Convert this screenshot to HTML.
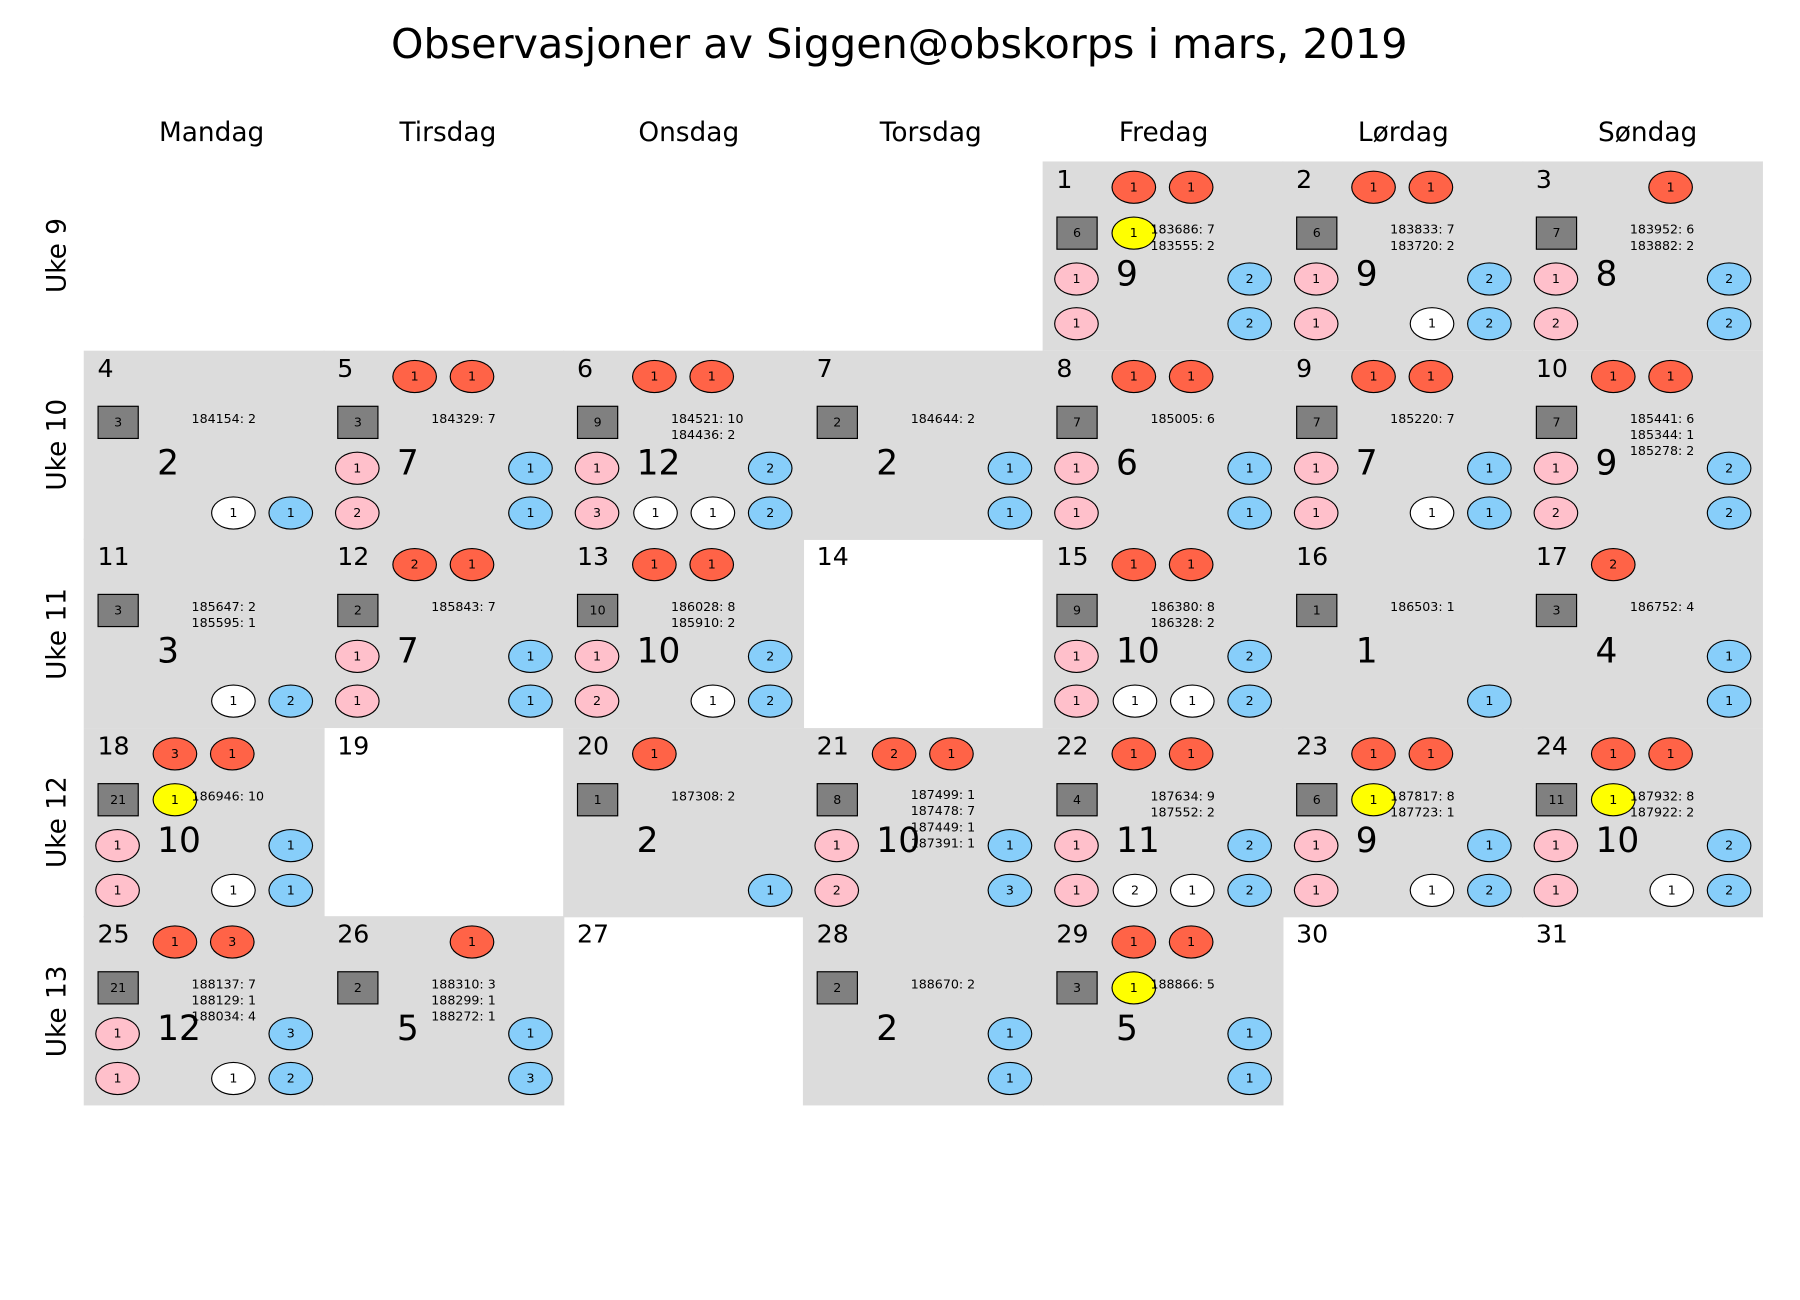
<!DOCTYPE html>
<html><head><meta charset="utf-8"><style>
html,body{margin:0;padding:0;background:#fff;width:1800px;height:1300px;overflow:hidden}
#w{position:absolute;left:0;top:2px;width:1560px;height:1127px;transform:scale(1.147);transform-origin:0 0;font-family:"DejaVu Sans","Liberation Sans",sans-serif;color:#000}
.title{position:absolute;left:0;width:1568px;top:17px;text-align:center;font-size:36px}
.h{position:absolute;top:101px;width:209px;text-align:center;font-size:23px}
.wk{position:absolute;left:50px;font-size:23px;transform:translate(-50%,-50%) rotate(-90deg);white-space:nowrap}
.cell{position:absolute;width:210px;height:165px;background:#dcdcdc}
.cell.e{background:transparent}
.d{position:absolute;left:12px;top:4px;font-size:22px}
.c{position:absolute;width:37px;height:27px;border:1px solid #000;border-radius:50%;font-size:11px;line-height:27px;text-align:center}
.R{background:#ff6347}.P{background:#ffc0cb}.B{background:#87cefa}.W{background:#fff}.Y{background:#ff0}
.r1{left:60px;top:8px}.r2{left:110px;top:8px}.y{left:60px;top:48px}
.p3{left:10px;top:88px}.p4{left:10px;top:127px}
.w1{left:61px;top:127px}.w2{left:111px;top:127px}
.b3{left:161px;top:88px}.b4{left:161px;top:127px}
.g{position:absolute;left:12px;top:48px;width:34px;height:27px;border:1px solid #000;background:#808080;font-size:11px;line-height:27px;text-align:center}
.t{position:absolute;left:94px;top:53px;font-size:11px;line-height:14px;white-space:nowrap}
.n{position:absolute;left:64px;top:79px;font-size:30px;line-height:40px}
</style></head><body><div id="w">
<div class="title">Observasjoner av Siggen@obskorps i mars, 2019</div>
<div class="h" style="left:80px">Mandag</div>
<div class="h" style="left:286px">Tirsdag</div>
<div class="h" style="left:496px">Onsdag</div>
<div class="h" style="left:707px">Torsdag</div>
<div class="h" style="left:910px">Fredag</div>
<div class="h" style="left:1119px">Lørdag</div>
<div class="h" style="left:1332px">Søndag</div>
<div class="wk" style="top:221px">Uke 9</div>
<div class="wk" style="top:386px">Uke 10</div>
<div class="wk" style="top:551px">Uke 11</div>
<div class="wk" style="top:715px">Uke 12</div>
<div class="wk" style="top:880px">Uke 13</div>

<!-- Row 0 -->
<div class="cell" style="left:909px;top:139px"><div class="d">1</div><div class="c R r1">1</div><div class="c R r2">1</div><div class="g">6</div><div class="c Y y">1</div><div class="t">183686: 7<br>183555: 2</div><div class="n">9</div><div class="c P p3">1</div><div class="c P p4">1</div><div class="c B b3">2</div><div class="c B b4">2</div></div>
<div class="cell" style="left:1118px;top:139px"><div class="d">2</div><div class="c R r1">1</div><div class="c R r2">1</div><div class="g">6</div><div class="t">183833: 7<br>183720: 2</div><div class="n">9</div><div class="c P p3">1</div><div class="c P p4">1</div><div class="c W w2">1</div><div class="c B b3">2</div><div class="c B b4">2</div></div>
<div class="cell" style="left:1327px;top:139px"><div class="d">3</div><div class="c R r2">1</div><div class="g">7</div><div class="t">183952: 6<br>183882: 2</div><div class="n">8</div><div class="c P p3">1</div><div class="c P p4">2</div><div class="c B b3">2</div><div class="c B b4">2</div></div>

<!-- Row 1 -->
<div class="cell" style="left:73px;top:304px"><div class="d">4</div><div class="g">3</div><div class="t">184154: 2</div><div class="n">2</div><div class="c W w2">1</div><div class="c B b4">1</div></div>
<div class="cell" style="left:282px;top:304px"><div class="d">5</div><div class="c R r1">1</div><div class="c R r2">1</div><div class="g">3</div><div class="t">184329: 7</div><div class="n">7</div><div class="c P p3">1</div><div class="c P p4">2</div><div class="c B b3">1</div><div class="c B b4">1</div></div>
<div class="cell" style="left:491px;top:304px"><div class="d">6</div><div class="c R r1">1</div><div class="c R r2">1</div><div class="g">9</div><div class="t">184521: 10<br>184436: 2</div><div class="n">12</div><div class="c P p3">1</div><div class="c P p4">3</div><div class="c W w1">1</div><div class="c W w2">1</div><div class="c B b3">2</div><div class="c B b4">2</div></div>
<div class="cell" style="left:700px;top:304px"><div class="d">7</div><div class="g">2</div><div class="t">184644: 2</div><div class="n">2</div><div class="c B b3">1</div><div class="c B b4">1</div></div>
<div class="cell" style="left:909px;top:304px"><div class="d">8</div><div class="c R r1">1</div><div class="c R r2">1</div><div class="g">7</div><div class="t">185005: 6</div><div class="n">6</div><div class="c P p3">1</div><div class="c P p4">1</div><div class="c B b3">1</div><div class="c B b4">1</div></div>
<div class="cell" style="left:1118px;top:304px"><div class="d">9</div><div class="c R r1">1</div><div class="c R r2">1</div><div class="g">7</div><div class="t">185220: 7</div><div class="n">7</div><div class="c P p3">1</div><div class="c P p4">1</div><div class="c W w2">1</div><div class="c B b3">1</div><div class="c B b4">1</div></div>
<div class="cell" style="left:1327px;top:304px"><div class="d">10</div><div class="c R r1">1</div><div class="c R r2">1</div><div class="g">7</div><div class="t">185441: 6<br>185344: 1<br>185278: 2</div><div class="n">9</div><div class="c P p3">1</div><div class="c P p4">2</div><div class="c B b3">2</div><div class="c B b4">2</div></div>

<!-- Row 2 -->
<div class="cell" style="left:73px;top:468px"><div class="d">11</div><div class="g">3</div><div class="t">185647: 2<br>185595: 1</div><div class="n">3</div><div class="c W w2">1</div><div class="c B b4">2</div></div>
<div class="cell" style="left:282px;top:468px"><div class="d">12</div><div class="c R r1">2</div><div class="c R r2">1</div><div class="g">2</div><div class="t">185843: 7</div><div class="n">7</div><div class="c P p3">1</div><div class="c P p4">1</div><div class="c B b3">1</div><div class="c B b4">1</div></div>
<div class="cell" style="left:491px;top:468px"><div class="d">13</div><div class="c R r1">1</div><div class="c R r2">1</div><div class="g">10</div><div class="t">186028: 8<br>185910: 2</div><div class="n">10</div><div class="c P p3">1</div><div class="c P p4">2</div><div class="c W w2">1</div><div class="c B b3">2</div><div class="c B b4">2</div></div>
<div class="cell e" style="left:700px;top:468px"><div class="d">14</div></div>
<div class="cell" style="left:909px;top:468px"><div class="d">15</div><div class="c R r1">1</div><div class="c R r2">1</div><div class="g">9</div><div class="t">186380: 8<br>186328: 2</div><div class="n">10</div><div class="c P p3">1</div><div class="c P p4">1</div><div class="c W w1">1</div><div class="c W w2">1</div><div class="c B b3">2</div><div class="c B b4">2</div></div>
<div class="cell" style="left:1118px;top:468px"><div class="d">16</div><div class="g">1</div><div class="t">186503: 1</div><div class="n">1</div><div class="c B b4">1</div></div>
<div class="cell" style="left:1327px;top:468px"><div class="d">17</div><div class="c R r1">2</div><div class="g">3</div><div class="t">186752: 4</div><div class="n">4</div><div class="c B b3">1</div><div class="c B b4">1</div></div>

<!-- Row 3 -->
<div class="cell" style="left:73px;top:633px"><div class="d">18</div><div class="c R r1">3</div><div class="c R r2">1</div><div class="g">21</div><div class="c Y y">1</div><div class="t">186946: 10</div><div class="n">10</div><div class="c P p3">1</div><div class="c P p4">1</div><div class="c W w2">1</div><div class="c B b3">1</div><div class="c B b4">1</div></div>
<div class="cell e" style="left:282px;top:633px"><div class="d">19</div></div>
<div class="cell" style="left:491px;top:633px"><div class="d">20</div><div class="c R r1">1</div><div class="g">1</div><div class="t">187308: 2</div><div class="n">2</div><div class="c B b4">1</div></div>
<div class="cell" style="left:700px;top:633px"><div class="d">21</div><div class="c R r1">2</div><div class="c R r2">1</div><div class="g">8</div><div class="t" style="top:52px">187499: 1<br>187478: 7<br>187449: 1<br>187391: 1</div><div class="n">10</div><div class="c P p3">1</div><div class="c P p4">2</div><div class="c B b3">1</div><div class="c B b4">3</div></div>
<div class="cell" style="left:909px;top:633px"><div class="d">22</div><div class="c R r1">1</div><div class="c R r2">1</div><div class="g">4</div><div class="t">187634: 9<br>187552: 2</div><div class="n">11</div><div class="c P p3">1</div><div class="c P p4">1</div><div class="c W w1">2</div><div class="c W w2">1</div><div class="c B b3">2</div><div class="c B b4">2</div></div>
<div class="cell" style="left:1118px;top:633px"><div class="d">23</div><div class="c R r1">1</div><div class="c R r2">1</div><div class="g">6</div><div class="c Y y">1</div><div class="t">187817: 8<br>187723: 1</div><div class="n">9</div><div class="c P p3">1</div><div class="c P p4">1</div><div class="c W w2">1</div><div class="c B b3">1</div><div class="c B b4">2</div></div>
<div class="cell" style="left:1327px;top:633px"><div class="d">24</div><div class="c R r1">1</div><div class="c R r2">1</div><div class="g">11</div><div class="c Y y">1</div><div class="t">187932: 8<br>187922: 2</div><div class="n">10</div><div class="c P p3">1</div><div class="c P p4">1</div><div class="c W w2">1</div><div class="c B b3">2</div><div class="c B b4">2</div></div>

<!-- Row 4 -->
<div class="cell" style="left:73px;top:797px"><div class="d">25</div><div class="c R r1">1</div><div class="c R r2">3</div><div class="g">21</div><div class="t">188137: 7<br>188129: 1<br>188034: 4</div><div class="n">12</div><div class="c P p3">1</div><div class="c P p4">1</div><div class="c W w2">1</div><div class="c B b3">3</div><div class="c B b4">2</div></div>
<div class="cell" style="left:282px;top:797px"><div class="d">26</div><div class="c R r2">1</div><div class="g">2</div><div class="t">188310: 3<br>188299: 1<br>188272: 1</div><div class="n">5</div><div class="c B b3">1</div><div class="c B b4">3</div></div>
<div class="cell e" style="left:491px;top:797px"><div class="d">27</div></div>
<div class="cell" style="left:700px;top:797px"><div class="d">28</div><div class="g">2</div><div class="t">188670: 2</div><div class="n">2</div><div class="c B b3">1</div><div class="c B b4">1</div></div>
<div class="cell" style="left:909px;top:797px"><div class="d">29</div><div class="c R r1">1</div><div class="c R r2">1</div><div class="g">3</div><div class="c Y y">1</div><div class="t">188866: 5</div><div class="n">5</div><div class="c B b3">1</div><div class="c B b4">1</div></div>
<div class="cell e" style="left:1118px;top:797px"><div class="d">30</div></div>
<div class="cell e" style="left:1327px;top:797px"><div class="d">31</div></div>
</div></body></html>
